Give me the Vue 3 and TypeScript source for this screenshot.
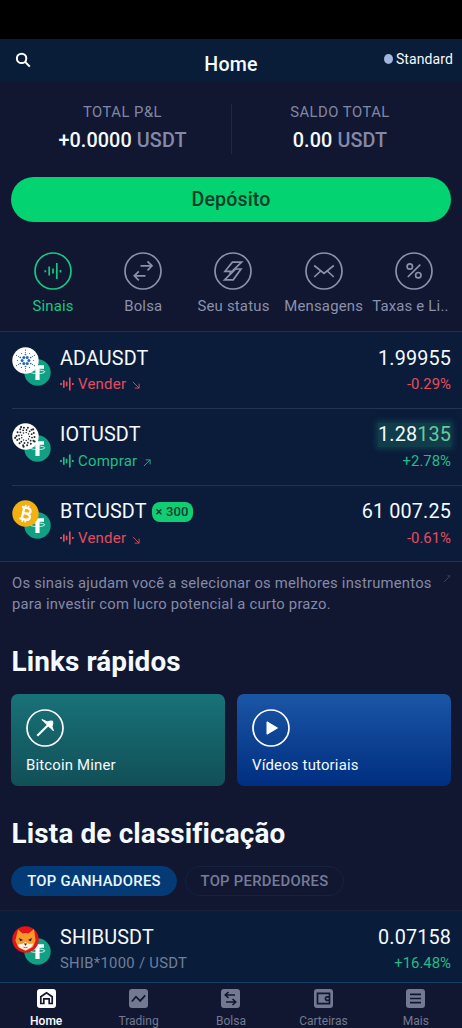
<script setup lang="ts">
interface Tick { x: number; y: number; r: number }
interface Row { id: string; symbol: string; coin: string; price: string; tail?: string; change: string; up: boolean; action: string; leverage?: string }

const rows: Row[] = [
  { id: 'ada', symbol: 'ADAUSDT', coin: 'ada', price: '1.99955', change: '-0.29%', up: false, action: 'Vender' },
  { id: 'iot', symbol: 'IOTUSDT', coin: 'iot', price: '1.28', tail: '135', change: '+2.78%', up: true, action: 'Comprar' },
  { id: 'btc', symbol: 'BTCUSDT', coin: 'btc', price: '61 007.25', change: '-0.61%', up: false, action: 'Vender', leverage: '× 300' },
]

const shortcuts = [
  { id: 'signals', label: 'Sinais' },
  { id: 'swap', label: 'Bolsa' },
  { id: 'status', label: 'Seu status' },
  { id: 'mail', label: 'Mensagens' },
  { id: 'fees', label: 'Taxas e Li..' },
]

const tabs = [
  { id: 'home', label: 'Home' },
  { id: 'trading', label: 'Trading' },
  { id: 'swap', label: 'Bolsa' },
  { id: 'wallet', label: 'Carteiras' },
  { id: 'more', label: 'Mais' },
]

function ring(count: number, radius: number, r: number, phase = 0): Tick[] {
  return Array.from({ length: count }, (_, i) => {
    const a = ((i + phase) / count) * Math.PI * 2
    return { x: 13.5 + Math.cos(a) * radius, y: 13.5 + Math.sin(a) * radius, r }
  })
}

const adaDots: Tick[] = [...ring(6, 3.4, 1.5), ...ring(6, 6, 0.85, 0.5), ...ring(12, 8, 0.6), ...ring(6, 10.3, 0.6, 0.5)]
const iotDots: Tick[] = [...ring(9, 4, 0.75), ...ring(12, 6.6, 0.9, 0.3), ...ring(14, 9, 1, 0.1), ...ring(5, 10.4, 1.1, 0.4)]
</script>

<template>
  <div class="app">
    <div class="statusbar"></div>
    <header class="topbar">
      <svg class="search" viewBox="0 0 16 16"><circle cx="6.6" cy="6.4" r="4.7" /><path d="M10 9.8 14.8 14.6" /></svg>
      <h1>Home</h1>
      <div class="account"><i></i><span>Standard</span></div>
    </header>

    <section class="totals">
      <div class="total"><span class="cap">TOTAL P&amp;L</span><span class="sum">+0.0000 <em>USDT</em></span></div>
      <div class="total"><span class="cap">SALDO TOTAL</span><span class="sum">0.00 <em>USDT</em></span></div>
    </section>

    <button class="deposit">Depósito</button>

    <nav class="shortcuts">
      <div v-for="s in shortcuts" :key="s.id" class="shortcut" :class="{ active: s.id === 'signals', clipped: s.id === 'fees' }">
        <svg viewBox="0 0 38 38">
          <circle cx="19" cy="19" r="18" />
          <path v-if="s.id === 'signals'" d="M11.3 18.2v2M15.2 14.5v9M19 16.5v5M22.8 11v16M26.5 18v2.5" />
          <path v-else-if="s.id === 'swap'" d="M16.5 13.8h11.5M23.5 9.3l4.5 4.5-4.5 4.5M21.5 23.8H10.3M14.8 19.3l-4.5 4.5 4.5 4.5" />
          <path v-else-if="s.id === 'status'" d="M17.2 19.3H11L18.4 10.2H27.6L15.4 21.8M20.8 17H27L19.2 27.8H10.6L22.4 16.2" />
          <path v-else-if="s.id === 'mail'" d="M9.2 13.5 19 21.5l9.8-8M9.2 25l6.5-6M28.8 25l-6.5-6" />
          <template v-else><circle cx="14.8" cy="14.5" r="2.7" /><circle cx="23.3" cy="23.2" r="2.7" /><path d="M25.3 12.6 12.8 25" /></template>
        </svg>
        <span>{{ s.label }}</span>
      </div>
    </nav>

    <section class="market">
      <div v-for="r in rows" :key="r.id" class="row">
        <div class="coins">
          <svg class="tether" viewBox="0 0 27 27">
            <circle cx="13.5" cy="13.5" r="13.2" fill="#10a184" />
            <path d="M7 6.2h13v3.6h-4.4V21h-4.2V9.8H7z" fill="#fff" />
            <ellipse cx="13.5" cy="12.8" rx="7.3" ry="1.8" fill="none" stroke="#fff" stroke-width=".8" />
          </svg>
          <svg class="coin" viewBox="0 0 27 27">
            <circle cx="13.5" cy="13.5" r="13.2" :fill="r.coin === 'btc' ? '#f4b011' : '#fff'" />
            <template v-if="r.coin === 'ada'"><circle v-for="(d, i) in adaDots" :key="i" :cx="d.x" :cy="d.y" :r="d.r" fill="#2467bb" /></template>
            <template v-else-if="r.coin === 'iot'"><circle v-for="(d, i) in iotDots" :key="i" :cx="d.x" :cy="d.y" :r="d.r" fill="#242a2c" /></template>
            <g v-else transform="rotate(13 13.5 13.5)" fill="none" stroke="#fff"><path d="M8.5 7.8H14.5q3.4.2 3.4 2.8T14.5 13.4H11M14.5 13.4q4.2.2 4.2 3.1t-4.2 3H8.5M11 7.8v11.5" stroke-width="2.3" /><path d="M12 5v3M15 5v3M12 19v3.3M15 19v3.3" stroke-width="1.6" /></g>
          </svg>
        </div>
        <div class="instrument">
          <div class="symbol">{{ r.symbol }}<b v-if="r.leverage">{{ r.leverage }}</b></div>
          <div class="signal" :class="r.up ? 'up' : 'down'">
            <svg class="wave" viewBox="0 0 14 14"><path d="M1 6v2M3.8 3.2v7.6M6.6 4.7v4.6M9.8.5v13M12.8 6v2" /></svg>
            <span>{{ r.action }}</span>
            <svg class="arrow" viewBox="0 0 9 9"><path v-if="r.up" d="M1 8 8 1M3 1h5v5" /><path v-else d="M1 1l7 7M8 3v5H3" /></svg>
          </div>
        </div>
        <div class="quote">
          <div class="price" :class="{ flash: r.tail }">{{ r.price }}<span v-if="r.tail">{{ r.tail }}</span></div>
          <div class="change" :class="r.up ? 'up' : 'down'">{{ r.change }}</div>
        </div>
      </div>
    </section>

    <section class="hint">
      <p>Os sinais ajudam você a selecionar os melhores instrumentos<br>para investir com lucro potencial a curto prazo.</p>
      <svg viewBox="0 0 9 9"><path d="M1 8 8 1M5 1h3" /></svg>
    </section>

    <h2 class="links-title">Links rápidos</h2>
    <section class="links">
      <div class="card miner">
        <svg viewBox="0 0 38 38"><circle cx="19" cy="19" r="18" /><path d="M11.3 26.7 22.5 15.8" stroke-width="2.2" /><path class="solid" d="M15.8 10.5 21.3 12.8 24.3 12 26.6 12.2 26.8 14.8 26 17.4 27.4 21.8 24 18.4 22.3 17.2 20 14.6z" /></svg>
        <span>Bitcoin Miner</span>
      </div>
      <div class="card videos">
        <svg viewBox="0 0 38 38"><circle cx="19" cy="19" r="18" /><path class="solid" d="M15 12.8 25.5 19 15 25.2z" /></svg>
        <span>Vídeos tutoriais</span>
      </div>
    </section>

    <h2 class="rank-title">Lista de classificação</h2>
    <div class="chips"><span class="chip selected">TOP GANHADORES</span><span class="chip">TOP PERDEDORES</span></div>

    <section class="market ranking">
      <div class="row">
        <div class="coins">
          <svg class="tether" viewBox="0 0 27 27">
            <circle cx="13.5" cy="13.5" r="13.2" fill="#10a184" />
            <path d="M7 6.2h13v3.6h-4.4V21h-4.2V9.8H7z" fill="#fff" />
            <ellipse cx="13.5" cy="12.8" rx="7.3" ry="1.8" fill="none" stroke="#fff" stroke-width=".8" />
          </svg>
          <svg class="coin" viewBox="0 0 27 27">
            <circle cx="13.5" cy="13.5" r="13.2" fill="#e51418" />
            <path d="M6 3.5 10.5 7.5q3-.8 6 0L22 3l1.6 11.5-2.6 6.5-7.5 4L6 21 3.4 14.5z" fill="#f79a2b" />
            <path d="M5.5 18.5 10 18l3.5-2 3.5 2 4.5-.5-2.3 3.7-5.7 3L7.8 22z" fill="#fff1df" />
            <path d="M7 12l4 1.9-2.8 1.3zM20 12l-4 1.9 2.8 1.3zM11.9 17.6h3.2l-1.6 2.2z" fill="#241a19" />
            <path d="M11.5 21.2q2 1 4 0" fill="none" stroke="#a63b32" stroke-width=".8" />
          </svg>
        </div>
        <div class="instrument"><div class="symbol">SHIBUSDT</div><div class="pair">SHIB*1000 / USDT</div></div>
        <div class="quote"><div class="price">0.07158</div><div class="change up">+16.48%</div></div>
      </div>
    </section>

    <nav class="tabbar">
      <div v-for="t in tabs" :key="t.id" class="tab" :class="{ active: t.id === 'home' }">
        <svg viewBox="0 0 19 19">
          <rect width="19" height="19" rx="3" />
          <path v-if="t.id === 'home'" d="M6.8 14.5H3.8V7.8L9.5 3.8l5.7 4v6.7h-3V9.8H6.8z" />
          <path v-else-if="t.id === 'trading'" d="M2.8 12.5 7 7.7l4.2 4.2 5-5.5" />
          <path v-else-if="t.id === 'swap'" d="M14 6H4.5M7.5 3 4.3 6l3.2 3M5 13h9.5M11.5 10l3.2 3-3.2 3" />
          <template v-else-if="t.id === 'wallet'"><path d="M3.5 4.3h12v10.4h-12z" /><path d="M16 7.8h-3.6q-2 1.8 0 3.6H16" /></template>
          <path v-else d="M4 5.3h11M4 9.5h11M4 13.7h11" />
        </svg>
        <span>{{ t.label }}</span>
      </div>
    </nav>
  </div>
</template>

<style>
html, body { background: #111731; }
</style>
<style scoped>
* { box-sizing: border-box; }
.app { width: 462px; height: 1028px; overflow: hidden; display: flex; flex-direction: column; background: #111731; color: #f5faff; font-family: Roboto, "Liberation Sans", sans-serif; }
.app > * { flex-shrink: 0; }
svg { display: block; fill: none; }
.statusbar { height: 39px; background: #000; }
.topbar { height: 43px; padding: 0 9px 0 15px; display: grid; grid-template-columns: 1fr auto 1fr; background: #091d39; }
.search { width: 16px; height: 16px; margin-top: 13px; stroke: #fff; stroke-width: 2; }
h1 { margin: 14px 6px 0 0; font-size: 19.6px; line-height: 23px; font-weight: 500; letter-spacing: .2px; }
.account { display: flex; align-items: center; justify-content: flex-end; gap: 3px; height: 18px; margin-top: 11px; font-size: 14px; letter-spacing: .1px; }
.account i { width: 9px; height: 10px; border-radius: 50%; background: #a1b6dd; }
.totals { height: 95px; padding: 22px 14px 0; display: grid; grid-template-columns: 1fr 1fr; }
.total { height: 50px; display: flex; flex-direction: column; align-items: center; }
.total + .total { border-left: 1px solid #212843; }
.cap { font-size: 14.8px; line-height: 17px; letter-spacing: .5px; font-weight: 400; color: #8087a4; }
.sum { font-size: 19.8px; line-height: 24px; margin-top: 8px; font-weight: 500; letter-spacing: .1px; }
em { font-style: normal; color: #8589a9; }
.deposit { height: 45px; width: 440px; margin: 0 11px; padding: 0; border: 0; border-radius: 23px; background: #03d471; color: #073e29; font: 500 19.6px/44px Roboto, sans-serif; letter-spacing: .15px; }
.shortcuts { height: 109px; padding: 30px 3px 0 8px; display: grid; grid-template-columns: repeat(5, 1fr); }
.shortcut { min-width: 0; display: flex; flex-direction: column; align-items: center; color: #8b91ac; font-size: 14.9px; line-height: 19px; letter-spacing: .2px; white-space: nowrap; }
.shortcut svg { width: 38px; height: 38px; stroke: currentColor; stroke-width: 1.7; margin-bottom: 7px; }
.shortcut.active { color: #16c982; }
.clipped span { margin-right: 7px; }
.market { background: #0b1c3b; border-top: 1px solid #23304a; border-bottom: 1px solid #24344d; }
.row { height: 76px; margin-left: 12px; padding: 14.5px 11px 0 0; display: flex; }
.row + .row { border-top: 1px solid #24344d; padding-top: 14px; }
.row:nth-child(2) { height: 77px; }
.coins { width: 48px; height: 42px; display: grid; grid-template: 1fr / 40px; }
.coins svg { grid-area: 1 / 1; width: 27px; height: 27px; margin-left: -.3px; }
.coins .tether { margin: 12px 0 0 11.7px; }
.instrument { flex: 1; }
.symbol { display: flex; align-items: center; font-size: 19.8px; line-height: 24px; letter-spacing: .15px; }
.symbol b { margin-left: 5px; width: 41px; height: 20px; border-radius: 8px; background: #13cd75; color: #09402e; font-size: 13px; line-height: 20px; font-weight: 500; text-align: center; }
.signal { display: flex; align-items: center; margin-top: 4px; font-size: 15px; line-height: 20px; letter-spacing: .2px; }
.row:first-child .signal, .row:first-child .change { margin-top: 3.4px; }
.wave { width: 14px; height: 14px; margin-right: 4px; stroke: currentColor; stroke-width: 1.7; }
.arrow { width: 8px; height: 8px; margin: 3px 0 0 6px; stroke: currentColor; stroke-width: 1; }
.up { color: #20be83; }
.down { color: #e34d5e; }
.quote { text-align: right; }
.price { font-size: 19.8px; line-height: 24px; letter-spacing: .15px; }
.price span { color: #6ac99d; }
.flash { background: #103d49; box-shadow: 0 0 5px 2px #103d49; }
.change { margin-top: 4px; font-size: 14.9px; line-height: 20px; }
.row .change { letter-spacing: 0; }
.hint { height: 77px; padding: 11px 11px 0 12px; display: flex; justify-content: space-between; }
.hint p { margin: 0; color: #858aa7; font-size: 14.8px; line-height: 21px; letter-spacing: .22px; white-space: nowrap; }
.hint svg { width: 8px; height: 8px; margin-top: 2px; stroke: #454b65; stroke-width: 1; }
h2 { margin: 0 11.6px; font-size: 27.9px; line-height: 36px; font-weight: 700; letter-spacing: .1px; }
.links-title { margin-top: 5px; }
.links { display: grid; grid-template-columns: 214px 214px; gap: 12px; margin: 14px 11px 0; }
.card { height: 92px; border-radius: 7px; padding: 15px; font-size: 14.9px; line-height: 18px; letter-spacing: .18px; }
.card svg { width: 38px; height: 38px; margin-bottom: 9px; stroke: #fff; stroke-width: 1.7; }
.card .solid { fill: #fff; stroke-width: 1; stroke-linejoin: round; }
.card span { display: block; }
.miner { background: linear-gradient(#187278, #124f57); }
.videos { background: linear-gradient(#1b56a6, #002e80); }
.rank-title { margin-top: 30px; letter-spacing: .14px; }
.chips { display: flex; gap: 8px; margin: 14px 11px 0; }
.chip { height: 30px; width: 159px; border: 1px solid #14233e; border-radius: 15px; color: #757c98; font-size: 14.8px; line-height: 28px; font-weight: 500; letter-spacing: .3px; text-align: center; white-space: nowrap; }
.chip.selected { width: 166px; border-color: #043b76; background: #043b76; color: #edf6ff; }
.ranking { height: 73px; margin-top: 14px; border-color: #17223a; border-bottom-color: #164067; background: #091d3a; }
.ranking .row { height: 71px; }
.pair { margin-top: 3.4px; color: #737e9a; font-size: 14.8px; line-height: 20px; letter-spacing: .3px; }
.tabbar { height: 45px; padding-top: 6px; display: grid; grid-template-columns: repeat(5, 1fr); }
.tab { display: flex; flex-direction: column; align-items: center; font-size: 12px; line-height: 14px; color: #737991; }
.tab svg { width: 19px; height: 19px; margin-bottom: 6px; stroke: #111731; stroke-width: 1.7; }
.tab rect { fill: #737991; stroke: none; }
.tab.active { color: #fff; font-weight: 500; }
.tab.active rect { fill: #fff; }
</style>
